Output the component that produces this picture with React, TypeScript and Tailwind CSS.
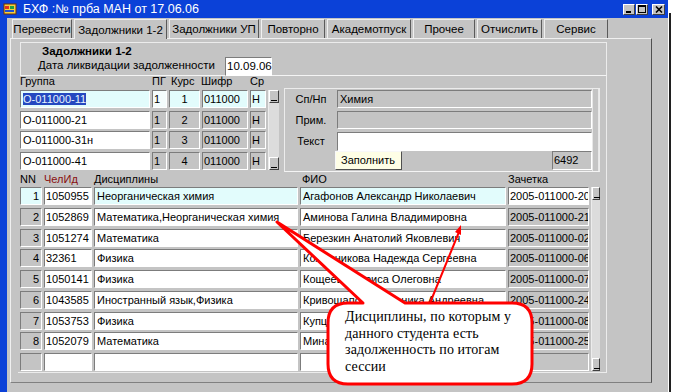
import React from "react";

const tabs = [
  { label: "Перевести", w: "w-[60px]" },
  { label: "Задолжники 1-2", w: "w-[93px]", active: true },
  { label: "Задолжники УП", w: "w-[90px]" },
  { label: "Повторно", w: "w-[64px]" },
  { label: "Академотпуск", w: "w-[84px]" },
  { label: "Прочее", w: "w-[62px]" },
  { label: "Отчислить", w: "w-[65px]" },
  { label: "Сервис", w: "w-[64px]" },
];

const groups = [
  { g: "О-011000-11", k: "1" },
  { g: "О-011000-21", k: "2" },
  { g: "О-011000-31н", k: "3" },
  { g: "О-011000-41", k: "4" },
];

const debtors = [
  { id: "1050955", d: "Неорганическая химия", fio: "Агафонов Александр Николаевич", z: "2005-011000-20" },
  { id: "1052869", d: "Математика,Неорганическая химия", fio: "Аминова Галина Владимировна", z: "2005-011000-21" },
  { id: "1051274", d: "Математика", fio: "Березкин Анатолий Яковлевич", z: "2005-011000-02" },
  { id: "32361", d: "Физика", fio: "Кожевникова Надежда Сергеевна", z: "2005-011000-06" },
  { id: "1050141", d: "Физика", fio: "Кощеева Лариса Олеговна", z: "2005-011000-07" },
  { id: "1043585", d: "Иностранный язык,Физика", fio: "Кривощапова Вероника Андреевна", z: "2005-011000-24" },
  { id: "1053753", d: "Физика", fio: "Купцова Елена Ивановна", z: "2005-011000-08" },
  { id: "1052079", d: "Математика", fio: "Минаева Ольга Петровна", z: "2005-011000-25" },
];

// утопленная ячейка в стиле Oracle Forms
const sunken =
  "border border-t-[#7c7c7c] border-l-[#7c7c7c] border-b-white border-r-white overflow-hidden whitespace-nowrap leading-[16px] px-[1px]";

function Cell({ className, children }: { className: string; children?: React.ReactNode }) {
  return <div className={`${sunken} ${className}`}>{children}</div>;
}

function ScrollBtn() {
  return (
    <div className="relative h-[13px] w-full bg-[#c4c4c4] border border-t-white border-l-white border-b-[#404040] border-r-[#404040]">
      <div className="absolute left-[1px] bottom-[1px] h-[1px] w-[6px] bg-black" />
    </div>
  );
}

function TitleIcon() {
  return (
    <svg width="14" height="14" viewBox="0 0 14 14">
      <rect x="1" y="2" width="12" height="10" fill="#f4d040" stroke="#703000" strokeWidth="1" />
      <rect x="2" y="4" width="4" height="3" fill="#e03020" />
      <rect x="7" y="4" width="4" height="3" fill="#20a040" />
      <rect x="2" y="8" width="9" height="2" fill="#2050d0" />
    </svg>
  );
}

export default function App() {
  return (
    <div className="relative flex w-[688px] h-[392px] bg-white overflow-hidden font-['Liberation_Sans',Arial,sans-serif] text-[11px] text-black">
      {/* окно */}
      <div className="flex flex-col w-[668px] h-full bg-[#0b41d8]">
        <div className="flex items-center h-[18px] pl-[3px] pr-[3px] text-white">
          <TitleIcon />
          <span className="ml-[6px] text-[12.5px] leading-[14px]">БХФ :№ прба МАН от 17.06.06</span>
          <div className="ml-auto flex gap-[1px]">
            <div className="relative w-[12px] h-[11px] bg-[#c4c4c4] border border-t-white border-l-white border-b-[#404040] border-r-[#404040]">
              <div className="absolute left-[2px] bottom-[1px] w-[5px] h-[2px] bg-black" />
            </div>
            <div className="relative w-[12px] h-[11px] bg-[#c4c4c4] border border-t-white border-l-white border-b-[#404040] border-r-[#404040]">
              <div className="absolute left-[1px] top-[0px] w-[8px] h-[8px] border border-black border-t-2" />
            </div>
            <div className="ml-[3px] w-[13px] h-[11px] bg-[#c4c4c4] border border-t-white border-l-white border-b-[#404040] border-r-[#404040] flex items-center justify-center">
              <svg width="8" height="7" viewBox="0 0 8 7">
                <path d="M1 0.5 L7 6.5 M7 0.5 L1 6.5" stroke="black" strokeWidth="1.6" />
              </svg>
            </div>
          </div>
        </div>

        <div className="flex flex-1">
          <div className="w-[7px]" />
          <div className="flex-1 bg-[#c4c4c4] pl-[3px]">
            {/* вкладки */}
            <div className="flex items-end gap-[2px] h-[20px] pl-[2px]">
              {tabs.map((t) => (
                <div
                  key={t.label}
                  className={`${t.w} ${
                    t.active ? "h-[20px] relative top-[1px] z-10 bg-[#c4c4c4]" : "h-[19px]"
                  } flex items-center justify-center border-t border-l border-r border-t-[#f0f0f0] border-l-[#f0f0f0] border-r-[#5a5a5a] text-[11.5px] leading-[14px]`}
                >
                  {t.label}
                </div>
              ))}
            </div>

            {/* панель вкладки */}
            <div className="w-[642px] h-[345px] border border-t-[#f0f0f0] border-l-[#f0f0f0] border-r-[#505050] border-b-[#808080]">
              <div className="mt-[3px] ml-[9px] w-[587px] h-[34px] border border-[#ececec] border-b-[#f4f4f4] pl-[21px] pt-[1px]">
                <div className="font-bold text-[11.5px] leading-[14px]">Задолжники 1-2</div>
                <div className="flex items-start">
                  <span className="ml-[-4px] text-[11.5px] leading-[14px]">Дата ликвидации задолженности</span>
                  <div className="ml-auto mr-[334px] mt-[-1px] w-[47px] h-[19px] bg-white border border-t-[#7c7c7c] border-l-[#7c7c7c] border-b-white border-r-white pl-[1px] leading-[17px] text-[11.5px]">
                    10.09.06
                  </div>
                </div>
              </div>

              <div className="ml-[7px] w-[589px] h-[297px] border-r border-b border-r-[#ececec] border-b-[#ececec] pl-[2px]">
                {/* группы */}
                <div className="flex h-[12px] leading-[11px]">
                  <span className="w-[132px]">Группа</span>
                  <span className="w-[17px]">ПГ</span>
                  <span className="w-[32px] pl-[2px]">Курс</span>
                  <span className="w-[49px]">Шифр</span>
                  <span>Ср</span>
                </div>
                <div className="flex h-[84px] items-start">
                  <div className="flex mt-[2px]">
                    <div className="flex flex-col gap-[2.5px]">
                      {groups.map((r, i) => {
                        const cy = i === 0;
                        return (
                          <div key={r.g} className="flex gap-[2px] h-[18px]">
                            <Cell className={`w-[130px] ${cy ? "bg-[#e2fcfc]" : "bg-white"} pl-[2px]`}>
                              {cy ? <span className="bg-[#2448c0] text-[#e8f4ff]">{r.g}</span> : r.g}
                            </Cell>
                            <Cell className={`w-[15px] ${cy ? "bg-[#f4fcfc]" : "bg-[#c4c4c4]"}`}>1</Cell>
                            <Cell className={`w-[31px] text-center ${cy ? "bg-[#e2fcfc]" : "bg-[#c4c4c4]"}`}>{r.k}</Cell>
                            <Cell className={`w-[46px] ${cy ? "bg-[#e2fcfc]" : "bg-[#c4c4c4]"}`}>011000</Cell>
                            <Cell className={`w-[16px] ${cy ? "bg-[#e2fcfc]" : "bg-[#c4c4c4]"}`}>Н</Cell>
                          </div>
                        );
                      })}
                    </div>
                    <div className="ml-[2px] w-[11px] h-[79.5px] flex flex-col bg-[#dcdcdc] border-l border-[#ececec]">
                      <ScrollBtn />
                      <div className="flex-1" />
                      <ScrollBtn />
                    </div>
                  </div>

                  {/* правая панель */}
                  <div className="ml-[5px] w-[316px] h-[84px] flex border border-[#ececec] border-b-[#f4f4f4]">
                    <div className="w-[52px] flex flex-col pt-[3px] text-center leading-[14px]">
                      <span className="h-[21px]">Сп/Нп</span>
                      <span className="h-[21px]">Прим.</span>
                      <span>Текст</span>
                    </div>
                    <div className="w-[255px] flex flex-col pt-[1px]">
                      <Cell className="h-[18px] bg-[#c4c4c4] pl-[2px]">Химия</Cell>
                      <Cell className="mt-[3px] h-[18px] bg-[#c4c4c4]" />
                      <Cell className="mt-[3px] h-[19px] bg-white" />
                      <div className="flex h-[19px]">
                        <div className="ml-[-2px] w-[67px] bg-[#fefee6] border border-t-[#f8f8f8] border-l-[#f8f8f8] border-r-[#505050] border-b-[#505050] pl-[5px] leading-[17px]">
                          Заполнить
                        </div>
                        <Cell className="ml-auto w-[40px] bg-[#c4c4c4] leading-[17px]">6492</Cell>
                      </div>
                    </div>
                    <div className="w-[7px] border-l border-r border-[#e8e8e8]" />
                  </div>
                </div>

                {/* задолжники */}
                <div className="flex h-[15px] leading-[15px]">
                  <span className="w-[24px]">NN</span>
                  <span className="w-[50px] text-[#8a1010]">ЧелИд</span>
                  <span className="w-[208px]">Дисциплины</span>
                  <span className="w-[206px]">ФИО</span>
                  <span>Зачетка</span>
                </div>
                <div className="flex">
                  <div className="flex flex-col gap-[2.75px]">
                    {[...debtors, null].map((r, i) => {
                      const cy = i === 0;
                      return (
                        <div key={i} className="flex gap-[2px] h-[18px]">
                          <Cell className={`w-[22px] text-right pr-[2px] ${cy ? "bg-[#e2fcfc]" : "bg-[#c4c4c4]"}`}>
                            {r ? i + 1 : ""}
                          </Cell>
                          <Cell className="w-[48px] bg-white">{r?.id}</Cell>
                          <Cell className={`w-[204px] pl-[2px] ${cy ? "bg-[#e2fcfc]" : "bg-white"}`}>{r?.d}</Cell>
                          <Cell className={`w-[206px] pl-[2px] ${cy ? "bg-[#e2fcfc]" : "bg-white"}`}>{r?.fio}</Cell>
                          <Cell className={`w-[81px] ${cy ? "bg-white" : "bg-[#c4c4c4]"}`}>{r?.z}</Cell>
                        </div>
                      );
                    })}
                  </div>
                  <div className="ml-[2px] w-[9px] h-[184px] flex flex-col bg-[#dcdcdc] border-l border-[#ececec]">
                    <ScrollBtn />
                    <div className="flex-1" />
                    <ScrollBtn />
                  </div>
                </div>
              </div>
            </div>
          </div>
        </div>
      </div>
      <div className="ml-[1px] mt-[13px] w-[2px] h-[379px] bg-[#202020]" />

      {/* выноска */}
      <svg className="absolute left-0 top-0 pointer-events-none" width="688" height="392">
        <path
          d="M348 303 L363 303 L277 222 L405 303 L512 303 Q532 303 532 323 L532 364 Q532 384 512 384 L348 384 Q328 384 328 364 L328 323 Q328 303 348 303 Z"
          fill="white"
          stroke="#ff0000"
          strokeWidth="3"
          strokeLinejoin="round"
        />
        <line x1="430" y1="303" x2="459" y2="232" stroke="#ff0000" strokeWidth="2" />
        <polygon points="461,225 461,235 455,232" fill="#ff0000" />
      </svg>
      <div className="absolute left-[345px] top-[309px] font-['Liberation_Serif','Times_New_Roman',serif] text-[14px] leading-[16.5px] tracking-[0.1px]">
        Дисциплины, по которым у
        <br />
        данного студента есть
        <br />
        задолженность по итогам
        <br />
        сессии
      </div>
    </div>
  );
}
